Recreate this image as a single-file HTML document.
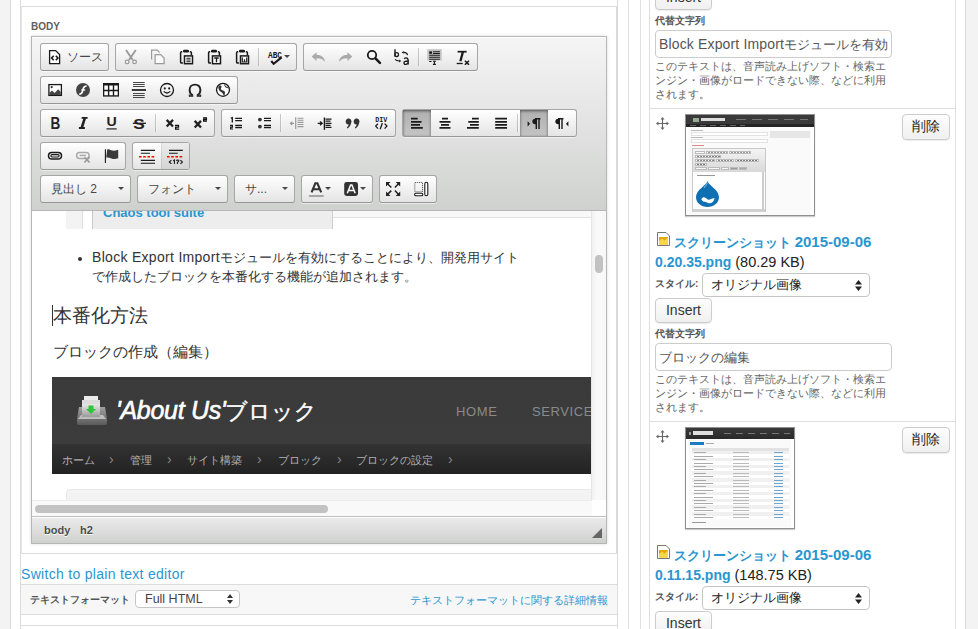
<!DOCTYPE html>
<html><head><meta charset="utf-8">
<style>
*{box-sizing:border-box}
html,body{margin:0;padding:0}
body{width:978px;height:629px;overflow:hidden;position:relative;background:#fff;font-family:"Liberation Sans",sans-serif;color:#333}
.a{position:absolute}
.vl{position:absolute;width:1px;background:#dcdcdc}
.hl{position:absolute;height:1px;background:#dcdcdc}
/* editor */
.chrome{position:absolute;left:31px;top:36px;width:576px;height:508px;border:1px solid #b6b6b6;box-shadow:0 0 3px rgba(0,0,0,.15);background:#fff}
.top{position:absolute;left:0;top:0;width:574px;height:174px;background:linear-gradient(#f5f5f5,#cfd1cf);border-bottom:1px solid #b6b6b6;box-shadow:0 1px 0 #fff inset}
.grp{position:absolute;height:28px;border:1px solid #a6a6a6;border-bottom-color:#979797;border-radius:3px;background:linear-gradient(#fff,#e4e4e4);box-shadow:0 1px 0 rgba(255,255,255,.5)}
.btn{position:absolute;top:0;width:28px;height:26px}
.btn.on{background:linear-gradient(#b0b0b0,#c4c4c4);box-shadow:0 1px 3px rgba(0,0,0,.55) inset}
.btn.half{background:linear-gradient(#ececec,#d4d4d4);box-shadow:1px 0 0 rgba(0,0,0,.08) inset}
.btn svg{position:absolute;left:6px;top:5px;width:16px;height:16px}
.sep{position:absolute;top:4px;width:1px;height:18px;background:rgba(0,0,0,.2);box-shadow:1px 0 1px rgba(255,255,255,.5)}
.arr{position:absolute;width:0;height:0;border-left:3px solid transparent;border-right:3px solid transparent;border-top:3px solid #474747}
.combo{position:absolute;top:138px;height:28px;border:1px solid #a6a6a6;border-bottom-color:#979797;border-radius:3px;background:linear-gradient(#fff,#e4e4e4)}
.combo span{position:absolute;left:10px;top:0;line-height:26px;font-size:12px;color:#474747;white-space:nowrap}
.combo .arr{top:11px}
.bottom{position:absolute;left:0;top:479px;width:574px;height:27px;border-top:1px solid #bfbfbf;background:linear-gradient(#ebebeb,#cfd1cf);box-shadow:0 1px 0 #fff inset}
.path{position:absolute;top:7px;font-size:11px;font-weight:bold;color:#4c4c4c;text-shadow:0 1px 0 #fff}
.content{position:absolute;left:0;top:174px;width:574px;height:305px;overflow:hidden;background:#fff}
.blue{color:#2a96d0}
/* right column */
.lab{position:absolute;font-size:11px;font-weight:bold;color:#555;white-space:nowrap}
.inp{position:absolute;height:27px;border:1px solid #ccc;border-radius:4px;background:#fff;font-size:14px;color:#555;padding:0 0 0 3px;line-height:25px;white-space:nowrap;overflow:hidden}
.desc{position:absolute;font-size:12px;line-height:15px;color:#666;width:240px}
.rbtn{position:absolute;height:25px;border:1px solid #ccc;border-radius:4px;background:linear-gradient(#fdfdfd,#f0f0f0);font-size:14px;color:#333;text-align:center;line-height:23px;box-shadow:0 1px 1px rgba(0,0,0,.08)}
.sel{position:absolute;height:25px;border:1px solid #c6c6c6;border-radius:4px;background:#fff;font-size:14px;color:#222;line-height:23px;padding-left:13px;white-space:nowrap}
</style></head><body>
<!-- page frame -->
<div class="a" style="left:0;top:0;width:10px;height:629px;background:#f3f3f3"></div>
<div class="vl" style="left:10px;top:0;height:629px;background:#dadada"></div>
<div class="a" style="left:966px;top:0;width:12px;height:629px;background:#f3f3f3"></div>
<div class="vl" style="left:965px;top:0;height:629px;background:#dadada"></div>
<div class="vl" style="left:20px;top:0;height:629px;background:#dadada"></div>
<div class="vl" style="left:617px;top:0;height:629px;background:#dadada"></div>
<div class="vl" style="left:628px;top:0;height:629px;background:#e2e2e2"></div>
<div class="vl" style="left:640px;top:0;height:629px;background:#e2e2e2"></div>
<div class="vl" style="left:649px;top:0;height:629px;background:#dedede"></div>
<div class="vl" style="left:955px;top:0;height:629px;background:#dedede"></div>
<!-- body fieldset -->
<div class="a" style="left:21px;top:6px;width:596px;height:548px;border:1px solid #e2e2e2;border-right-color:#dadada;border-bottom-color:#dadada;border-top-color:#dadada;border-left-color:#e6e6e6"></div>
<div class="a" style="left:31px;top:21px;font-size:10px;line-height:12px;font-weight:bold;color:#606060">BODY</div>

<div class="chrome">
 <div class="top" id="tb"><div class="grp" style="left:8px;top:6px;width:69px"><div class="btn" style="left:0px;width:67px"><svg viewBox="0 0 16 16"><path d="M2.6 1.6H8.6L12.6 5.6V14.6H2.6Z" fill="#fff" stroke="#1a1a1a" stroke-width="1.3"/><path d="M6.7 6.8L4.6 9 6.7 11.2M8.8 6.8L10.9 9 8.8 11.2" fill="none" stroke="#1a1a1a" stroke-width="1.6"/></svg><span class="a" style="left:26px;top:5px;font-size:12px;line-height:16px;color:#474747">ソース</span></div></div><div class="grp" style="left:83px;top:6px;width:182px"><div class="btn" style="left:0px;width:28px"><svg viewBox="0 0 16 16"><path d="M4 1L10.8 11M13.8 1L7 11" stroke="#999" stroke-width="1.8"/><circle cx="5.2" cy="12.9" r="1.8" fill="#fff" stroke="#999" stroke-width="1.3"/><circle cx="12.6" cy="12.9" r="1.8" fill="#fff" stroke="#999" stroke-width="1.3"/></svg></div><div class="btn" style="left:28px;width:28px"><svg viewBox="0 0 16 16"><path d="M1.6 10.4V1.2H7.3L9.6 3.6" fill="none" stroke="#999" stroke-width="1.2"/><path d="M5.1 5.6H10.6L14.1 9.1V14.7H5.1Z" fill="#fafafa" stroke="#999" stroke-width="1.2"/></svg></div><div class="btn" style="left:56px;width:28px"><svg viewBox="0 0 16 16"><path d="M4.2 2.8H3.6Q2.6 2.8 2.6 3.8V13Q2.6 14.1 3.6 14.1H5" fill="none" stroke="#1a1a1a" stroke-width="1.5"/><path d="M11.8 2.8H12.4Q13.4 2.8 13.4 3.8V6.3" fill="none" stroke="#1a1a1a" stroke-width="1.5"/><rect x="5" y="0.8" width="6" height="2.6" rx="1.2" fill="#1a1a1a"/><rect x="6.5" y="6.9" width="8" height="7.8" fill="#fff" stroke="#1a1a1a" stroke-width="1.5"/><path d="M8.4 9.2H12.6M8.4 11H12.6M8.4 12.8H12.6" stroke="#1a1a1a" stroke-width="1.1"/></svg></div><div class="btn" style="left:84px;width:28px"><svg viewBox="0 0 16 16"><path d="M4.2 2.8H3.6Q2.6 2.8 2.6 3.8V13Q2.6 14.1 3.6 14.1H5" fill="none" stroke="#1a1a1a" stroke-width="1.5"/><path d="M11.8 2.8H12.4Q13.4 2.8 13.4 3.8V6.3" fill="none" stroke="#1a1a1a" stroke-width="1.5"/><rect x="5" y="0.8" width="6" height="2.6" rx="1.2" fill="#1a1a1a"/><rect x="6.5" y="6.9" width="8" height="7.8" fill="#fff" stroke="#1a1a1a" stroke-width="1.5"/><path d="M8.3 9H12.7M10.5 9V13.3" stroke="#1a1a1a" stroke-width="1.4"/></svg></div><div class="btn" style="left:112px;width:28px"><svg viewBox="0 0 16 16"><path d="M4.2 2.8H3.6Q2.6 2.8 2.6 3.8V13Q2.6 14.1 3.6 14.1H5" fill="none" stroke="#1a1a1a" stroke-width="1.5"/><path d="M11.8 2.8H12.4Q13.4 2.8 13.4 3.8V6.3" fill="none" stroke="#1a1a1a" stroke-width="1.5"/><rect x="5" y="0.8" width="6" height="2.6" rx="1.2" fill="#1a1a1a"/><rect x="6.5" y="6.9" width="8" height="7.8" fill="#fff" stroke="#1a1a1a" stroke-width="1.5"/><path d="M8.3 8.6V13H12.7V8.6M10.5 10.2V13" fill="none" stroke="#1a1a1a" stroke-width="1.2"/></svg></div><div class="sep" style="left:142px"></div><div class="btn" style="left:145px;width:35px"><svg viewBox="0 0 16 16"><text x="1" y="8.8" font-family="Liberation Mono" font-size="9" font-weight="bold" fill="#1a1a1a" textLength="14" lengthAdjust="spacingAndGlyphs">ABC</text><path d="M4.3 12L6.6 14.8 14.6 8.4" fill="none" stroke="#1a1a1a" stroke-width="2.1"/></svg><div class="arr" style="left:23px;top:11px"></div></div></div><div class="grp" style="left:271px;top:6px;width:175px"><div class="btn" style="left:0px;width:28px"><svg viewBox="0 0 16 16"><path d="M6.5 3.3L1.7 7.6 6.5 11.9V9.3C10 9.2 12.8 10.3 15 12.8 14.6 8.6 11.3 5.9 6.5 5.8Z" fill="#aaa"/></svg></div><div class="btn" style="left:28px;width:28px"><svg viewBox="0 0 16 16"><path d="M9.5 3.3L14.3 7.6 9.5 11.9V9.3C6 9.2 3.2 10.3 1 12.8 1.4 8.6 4.7 5.9 9.5 5.8Z" fill="#aaa"/></svg></div><div class="btn" style="left:56px;width:28px"><svg viewBox="0 0 16 16"><circle cx="6" cy="6" r="4.2" fill="none" stroke="#1a1a1a" stroke-width="1.8"/><path d="M9.4 9.4L13.9 13.9" stroke="#1a1a1a" stroke-width="2.6" stroke-linecap="round"/></svg></div><div class="btn" style="left:84px;width:28px"><svg viewBox="0 0 16 16"><path d="M1 0.3V7.8" stroke="#1a1a1a" stroke-width="1.4"/><ellipse cx="2.7" cy="5.6" rx="1.8" ry="2" fill="none" stroke="#1a1a1a" stroke-width="1.3"/><path d="M10.2 9.8Q11.5 8.3 13 9.2Q14.2 9.9 14.2 11.5V15.6M14.2 12.3Q10 11.8 10 13.8Q10 15.6 12 15.4Q13.5 15.2 14.2 13.5" fill="none" stroke="#1a1a1a" stroke-width="1.4"/><path d="M13.6 6.1Q13 3.4 9.6 3.4" fill="none" stroke="#1a1a1a" stroke-width="1.1"/><path d="M7.6 3.4L9.8 2 9.8 4.8Z" fill="#1a1a1a"/><path d="M1.2 10.3Q2 12 5.3 12" fill="none" stroke="#1a1a1a" stroke-width="1.1"/><path d="M7.3 12L5.1 10.6 5.1 13.4Z" fill="#1a1a1a"/></svg></div><div class="sep" style="left:114px"></div><div class="btn" style="left:117px;width:28px"><svg viewBox="0 0 16 16"><rect x="0.3" y="0.2" width="14.4" height="11.3" fill="#c4c4c4"/><rect x="2.2" y="2.4" width="2.8" height="2.4" fill="#1a1a1a"/><path d="M5.9 2.8H12.9M5.9 4.5H12.9M2.2 6.3H12.9M2.2 8.2H12.9M2.2 10.2H12.9M2.2 12.5H4.6" stroke="#1a1a1a" stroke-width="1.1"/><path d="M5.9 12.3H8.9M7.4 12.3V15.4M5.9 15.4H8.9" stroke="#1a1a1a" stroke-width="1.1"/></svg></div><div class="btn" style="left:145px;width:28px"><svg viewBox="0 0 16 16"><path d="M2.6 2.7H11.6" stroke="#1a1a1a" stroke-width="1.7"/><path d="M7.9 2.7L5.4 12.2" stroke="#1a1a1a" stroke-width="2.3"/><path d="M1.7 14.5H7.7" stroke="#1a1a1a" stroke-width="1.3"/><path d="M9.9 11.7L14 15.8M14 11.7L9.9 15.8" stroke="#1a1a1a" stroke-width="1.5"/></svg></div></div><div class="grp" style="left:8px;top:39px;width:198px"><div class="btn" style="left:0px;width:28px"><svg viewBox="0 0 16 16"><rect x="1.9" y="2.6" width="12.5" height="10.8" fill="#fff" stroke="#1a1a1a" stroke-width="1.3"/><circle cx="4.7" cy="5.2" r="1.1" fill="#333"/><path d="M2.5 13V10.8L5 8.4 7.6 11 11.2 7.2 13.8 10V13Z" fill="#444"/></svg></div><div class="btn" style="left:28px;width:28px"><svg viewBox="0 0 16 16"><circle cx="8" cy="8" r="7" fill="#444"/><path d="M4.3 12.2C6.4 12.2 7.1 11 7.6 9.1L8.3 6.4C8.8 4.8 9.6 4 11.7 4" fill="none" stroke="#fff" stroke-width="1.7"/><path d="M6.2 8H10.2" stroke="#fff" stroke-width="1.3"/></svg></div><div class="btn" style="left:56px;width:28px"><svg viewBox="0 0 16 16"><rect x="0" y="1" width="16" height="13.6" fill="#1a1a1a"/><path d="M1.3 3.6H4.9V7.8H1.3ZM6.3 3.6H9.8V7.8H6.3ZM11.2 3.6H14.7V7.8H11.2ZM1.3 9.2H4.9V13.3H1.3ZM6.3 9.2H9.8V13.3H6.3ZM11.2 9.2H14.7V13.3H11.2Z" fill="#fff"/></svg></div><div class="btn" style="left:84px;width:28px"><svg viewBox="0 0 16 16"><path d="M2 0.5H13.7M2 2.5H13.7M2 4.5H13.7M2 11.5H13.7M2 13.5H13.7M2 15.5H13.7" stroke="#333" stroke-width="0.9"/><path d="M0.8 8H15" stroke="#1a1a1a" stroke-width="1.7"/></svg></div><div class="btn" style="left:112px;width:28px"><svg viewBox="0 0 16 16"><circle cx="8" cy="8" r="6.5" fill="none" stroke="#1a1a1a" stroke-width="1.3"/><circle cx="5.8" cy="6.4" r="1.05" fill="#1a1a1a"/><circle cx="10.2" cy="6.4" r="1.05" fill="#1a1a1a"/><path d="M4.7 9.4Q8 12.6 11.3 9.4" fill="none" stroke="#1a1a1a" stroke-width="1.3"/></svg></div><div class="btn" style="left:140px;width:28px"><svg viewBox="0 0 16 16"><path d="M5.8 13.4C3.6 12.2 2.6 10.2 2.6 7.9 2.6 4.6 4.9 2.6 8 2.6 11.1 2.6 13.4 4.6 13.4 7.9 13.4 10.2 12.4 12.2 10.2 13.4" fill="none" stroke="#222" stroke-width="1.9"/><path d="M2 13.9H6.3M9.7 13.9H14" stroke="#222" stroke-width="1.5"/><path d="M2.3 12.5V14.5M13.7 12.5V14.5" stroke="#222" stroke-width="1"/></svg></div><div class="btn" style="left:168px;width:28px"><svg viewBox="0 0 16 16"><circle cx="8" cy="7.8" r="6.5" fill="#fff" stroke="#1a1a1a" stroke-width="1.3"/><path d="M4 3.8C5.5 3 6.8 3.6 6.5 5 6.2 6.2 5.5 6.6 6.2 7.6 7.2 8.8 9.2 8.4 9.8 9.8 10.3 11 9.6 12.2 9.6 13.6L8.9 14C8.4 12.5 7.9 11.6 6.8 10.6 5.4 9.4 4 8.6 3.5 6.8 3.2 5.6 3.3 4.6 4 3.8Z" fill="#333"/><path d="M9.5 2C10.5 2.6 10.2 3.8 11.2 4.5 12.3 5.2 13.6 5 14 6.2 13 6.4 11.8 6.2 10.8 5.6 9.8 4.9 9 3.4 9.5 2Z" fill="#333"/></svg></div></div><div class="grp" style="left:8px;top:72px;width:175px"><div class="btn" style="left:0px;width:28px"><svg viewBox="0 0 16 16"><text x="3.6" y="13.9" font-family="Liberation Sans" font-size="16.3" font-weight="bold" fill="#222" textLength="9.8" lengthAdjust="spacingAndGlyphs">B</text></svg></div><div class="btn" style="left:28px;width:28px"><svg viewBox="0 0 16 16"><path d="M6.6 2.9H12.6M3.9 13H9.9" stroke="#222" stroke-width="1.9"/><path d="M9.9 2.9L6.7 13" stroke="#222" stroke-width="2.6"/></svg></div><div class="btn" style="left:56px;width:28px"><svg viewBox="0 0 16 16"><text x="3.5" y="11.4" font-family="Liberation Sans" font-size="12.8" font-weight="bold" fill="#222" textLength="10.2" lengthAdjust="spacingAndGlyphs">U</text><path d="M3.5 13.9H13.7" stroke="#222" stroke-width="1.2"/></svg></div><div class="btn" style="left:84px;width:28px"><svg viewBox="0 0 16 16"><text x="2.3" y="13.5" font-family="Liberation Sans" font-size="15.5" font-weight="bold" fill="#222" textLength="11.5" lengthAdjust="spacingAndGlyphs">S</text><path d="M1.8 8.3H15" stroke="#222" stroke-width="1.3"/></svg></div><div class="sep" style="left:114px"></div><div class="btn" style="left:117px;width:28px"><svg viewBox="0 0 16 16"><path d="M2.7 4.9L9 11.5M9 4.9L2.7 11.5" stroke="#222" stroke-width="2.3"/><path d="M11 10.3H14.5V12.2H11.6V14.2H15.2" fill="none" stroke="#111" stroke-width="1.3"/></svg></div><div class="btn" style="left:145px;width:28px"><svg viewBox="0 0 16 16"><path d="M2.7 5.9L9 12.5M9 5.9L2.7 12.5" stroke="#222" stroke-width="2.3"/><path d="M11 2.8H14.4V4.5H11.6V6.2H15" fill="none" stroke="#111" stroke-width="1.3"/></svg></div></div><div class="grp" style="left:189px;top:72px;width:175px"><div class="btn" style="left:0px;width:28px"><svg viewBox="0 0 16 16"><path d="M2.8 3.2L4.3 2.7V7.6" fill="none" stroke="#1a1a1a" stroke-width="1.3"/><path d="M2 10.3H4.4V12.1H2.6V14H5" fill="none" stroke="#1a1a1a" stroke-width="1.2"/><path d="M7.2 3.4H14M7.2 5.6H14M7.2 10.5H14M7.2 12.6H14" stroke="#1a1a1a" stroke-width="1.3"/></svg></div><div class="btn" style="left:28px;width:28px"><svg viewBox="0 0 16 16"><circle cx="3.9" cy="4.6" r="1.9" fill="#333"/><circle cx="3.9" cy="11.6" r="1.9" fill="#333"/><path d="M8 3.4H15M8 5.6H15M8 10.5H15M8 12.6H15" stroke="#1a1a1a" stroke-width="1.3"/></svg></div><div class="sep" style="left:58px"></div><div class="btn" style="left:61px;width:28px"><svg viewBox="0 0 16 16"><path d="M8.5 3.2H14.5M8.5 5.3H14.5M8.5 7.4H14.5M8.5 9.5H14.5M8.5 11.6H14.5" stroke="#999" stroke-width="1.1"/><path d="M6.7 2.3V14" stroke="#999" stroke-width="1.2"/><path d="M5 8.4H1.5M3.3 6.6L1.3 8.4 3.3 10.2" fill="none" stroke="#999" stroke-width="1.1"/></svg></div><div class="btn" style="left:89px;width:28px"><svg viewBox="0 0 16 16"><path d="M8.5 4.2H14.5M8.5 6.2H13.5M8.5 8.3H14.5M8.5 10.3H13.5M8.5 12.4H14.5" stroke="#1a1a1a" stroke-width="1.3"/><path d="M7.4 2.5V14.8" stroke="#1a1a1a" stroke-width="1.4"/><path d="M0.7 8.3H4.5M3 6.4L5.2 8.3 3 10.2" fill="none" stroke="#1a1a1a" stroke-width="1.3"/></svg></div><div class="btn" style="left:117px;width:28px"><svg viewBox="0 0 16 16"><path d="M0.7 6.6A2.9 2.9 0 1 1 6.3 7.4C5.8 10 4.6 11.8 2.6 13.4L1.8 12.6C2.9 11.5 3.5 10.6 3.7 9.5A2.9 2.9 0 0 1 0.7 6.6ZM8.7 6.6A2.9 2.9 0 1 1 14.3 7.4C13.8 10 12.6 11.8 10.6 13.4L9.8 12.6C10.9 11.5 11.5 10.6 11.7 9.5A2.9 2.9 0 0 1 8.7 6.6Z" fill="#333"/></svg></div><div class="btn" style="left:145px;width:28px"><svg viewBox="0 0 16 16"><text x="2.3" y="6.9" font-family="Liberation Mono" font-size="7" font-weight="bold" fill="#1a1a1a" textLength="12" lengthAdjust="spacingAndGlyphs">DIV</text><path d="M5 8.6L2.7 11.1 5 13.6M11.6 8.6L13.9 11.1 11.6 13.6M9.4 8L7.2 14.3" fill="none" stroke="#1a1a1a" stroke-width="1.3"/></svg></div></div><div class="grp" style="left:370px;top:72px;width:175px"><div class="btn on" style="left:0px;width:28px"><svg viewBox="0 0 16 16"><path d="M2 3.7H8.7M2 6.8H12.5M2 9.8H11M2 12.9H13.8" stroke="#1a1a1a" stroke-width="1.8"/></svg></div><div class="btn" style="left:28px;width:28px"><svg viewBox="0 0 16 16"><path d="M5 3.7H11M2.5 6.8H13.5M4 9.8H12M2.5 12.9H13.5" stroke="#1a1a1a" stroke-width="1.8"/></svg></div><div class="btn" style="left:56px;width:28px"><svg viewBox="0 0 16 16"><path d="M7 3.7H13.8M3.3 6.8H13.8M5 9.8H13.8M2 12.9H13.8" stroke="#1a1a1a" stroke-width="1.8"/></svg></div><div class="btn" style="left:84px;width:28px"><svg viewBox="0 0 16 16"><path d="M2.2 3.7H14M2.2 6.8H14M2.2 9.8H14M2.2 12.9H14" stroke="#1a1a1a" stroke-width="1.8"/></svg></div><div class="sep" style="left:114px"></div><div class="btn on" style="left:117px;width:28px"><svg viewBox="0 0 16 16"><path d="M1.6 6.2V11.4L4 8.8Z" fill="#1a1a1a"/><path d="M10 3.7H9.2A2.8 2.8 0 0 0 9.2 9.3H10Z" fill="#1a1a1a"/><path d="M10.3 3.7V13.9M13 3.7V13.9M9 3.7H14.4" fill="none" stroke="#1a1a1a" stroke-width="1.4"/></svg></div><div class="btn" style="left:145px;width:28px"><svg viewBox="0 0 16 16"><path d="M14.4 6.2V11.4L12 8.8Z" fill="#1a1a1a"/><path d="M5 3.7H4.2A2.8 2.8 0 0 0 4.2 9.3H5Z" fill="#1a1a1a"/><path d="M5.3 3.7V13.9M8 3.7V13.9M4 3.7H9.4" fill="none" stroke="#1a1a1a" stroke-width="1.4"/></svg></div></div><div class="grp" style="left:8px;top:105px;width:86px"><div class="btn" style="left:0px;width:28px"><svg viewBox="0 0 16 16"><rect x="1.5" y="4.5" width="13" height="6.6" rx="3.3" fill="none" stroke="#1a1a1a" stroke-width="1.5"/><rect x="3.9" y="6.6" width="8.2" height="2.4" rx="1.2" fill="none" stroke="#1a1a1a" stroke-width="1.2"/></svg></div><div class="btn" style="left:28px;width:28px"><svg viewBox="0 0 16 16"><rect x="1.6" y="4.4" width="12.5" height="6" rx="3" fill="none" stroke="#aaa" stroke-width="1.5"/><path d="M4.6 7.4H11" stroke="#aaa" stroke-width="1.5"/><path d="M9.4 9.2L14.6 14.4M14.6 9.2L9.4 14.4" stroke="#999" stroke-width="1.5"/></svg></div><div class="btn" style="left:56px;width:28px"><svg viewBox="0 0 16 16"><path d="M2.4 1.2V15" stroke="#1a1a1a" stroke-width="1.1"/><path d="M4.2 1.6C5 1 6.4 1.6 8.2 2.3 10.4 3.1 12.6 2.6 15.2 1.8V10.2C12.8 11 10.6 11.3 8.4 10.4 6.6 9.7 5 9.2 3.2 9.6Z" fill="#3a3a3a"/></svg></div></div><div class="grp" style="left:100px;top:105px;width:58px"><div class="btn" style="left:0px;width:28px"><svg viewBox="0 0 16 16"><path d="M1.8 2.4H16M1.8 5.2H11M1.8 12.4H16M1.8 15.2H16" stroke="#1a1a1a" stroke-width="1.1"/><path d="M0 8.8H16" stroke="#f00" stroke-width="1.6" stroke-dasharray="2.6 1.6"/></svg></div><div class="btn half" style="left:28px;width:28px"><svg viewBox="0 0 16 16"><path d="M2 2.4H15.8M2 5.2H10.7" stroke="#1a1a1a" stroke-width="1.1"/><path d="M0 8.8H15.8" stroke="#f00" stroke-width="1.6" stroke-dasharray="2.6 1.6"/><path d="M4.4 12.1L2.3 14 4.4 15.9M6.2 12.8L7.4 12V15.9M9 12.5Q9.6 12 11 12Q12 12.2 11.8 13Q11.5 13.6 10.4 14.4V15.9M13.4 12.1L15.5 14 13.4 15.9" fill="none" stroke="#1a1a1a" stroke-width="1.1"/></svg></div></div><div class="combo" style="left:8px;width:91px"><span>見出し 2</span><div class="arr" style="left:77px"></div></div><div class="combo" style="left:105px;width:91px"><span>フォント</span><div class="arr" style="left:77px"></div></div><div class="combo" style="left:202px;width:61px"><span>サ...</span><div class="arr" style="left:47px"></div></div><div class="grp" style="left:269px;top:138px;width:72px"><div class="btn" style="left:0px;width:35px"><svg viewBox="0 0 16 16"><path d="M3.6 11.4L7.3 2.3H9.4L13.2 11.4M5 8.3H11.8" fill="none" stroke="#333" stroke-width="2.1"/><path d="M0.9 15H15.7" stroke="#888" stroke-width="1.4"/></svg><div class="arr" style="left:23px;top:11px"></div></div><div class="btn" style="left:35px;width:35px"><svg viewBox="0 0 16 16"><rect x="1.2" y="1.1" width="13.8" height="13.9" rx="2.4" fill="#333"/><path d="M4.3 12.3L7.6 4H8.9L12.2 12.3M5.6 9.5H10.9" fill="none" stroke="#fff" stroke-width="1.5"/></svg><div class="arr" style="left:23px;top:11px"></div></div></div><div class="grp" style="left:347px;top:138px;width:58px"><div class="btn" style="left:0px;width:28px"><svg viewBox="0 0 16 16"><path d="M1 2.2L5.3 6.5M13 2.2L8.9 6.5M1 13.9L5.3 9.6M13 13.9L8.9 9.6" stroke="#222" stroke-width="1.5"/><path d="M0 1.1H4.5L0 5.6ZM14.2 1.1H9.7L14.2 5.6ZM0 15H4.5L0 10.5ZM14.2 15H9.7L14.2 10.5Z" fill="#222"/></svg></div><div class="btn" style="left:28px;width:28px"><svg viewBox="0 0 16 16"><path d="M0.8 1.5H8.5V10.8H0.8Z" fill="none" stroke="#333" stroke-width="0.9" stroke-dasharray="1 1"/><rect x="0.6" y="12.2" width="8.2" height="2.6" rx="1.3" fill="#fff" stroke="#1a1a1a" stroke-width="1.1"/><rect x="10.8" y="1.2" width="3" height="13.6" rx="1.5" fill="#fff" stroke="#1a1a1a" stroke-width="1.1"/></svg></div></div></div>
 <div class="content" id="ct">
<div class="a" style="left:34px;top:0;width:17px;height:18px;background:#f3f3f3;border-right:1px solid #e0e0e0"></div>
<div class="a" style="left:60px;top:0;width:241px;height:18px;background:#ededed;border-left:1px solid #c8c8c8;border-right:1px solid #cfcfcf"></div>
<div class="a blue" style="left:71px;top:-6px;font-size:13px;font-weight:bold;line-height:16px">Chaos tool suite</div>
<div class="a" style="left:301px;top:0;width:258px;height:7px;background:#f8f8f8;border-bottom:1px solid #e2e2e2"></div>
<div class="a" style="left:46px;top:46px;width:4px;height:4px;border-radius:2px;background:#333"></div>
<div class="a" style="left:60px;top:36px;font-size:13px;line-height:20px;height:20px;color:#333;white-space:nowrap"><span style="font-size:14px;letter-spacing:.3px;line-height:20px">Block Export Import</span>モジュールを有効にすることにより、開発用サイト</div><div class="a" style="left:60px;top:56px;font-size:13px;line-height:20px;color:#333;white-space:nowrap">で作成したブロックを本番化する機能が追加されます。</div>
<div class="a" style="left:20px;top:94px;width:1px;height:21px;background:#333"></div>
<div class="a" style="left:21px;top:92px;font-size:19px;line-height:26px;color:#333;white-space:nowrap">本番化方法</div>
<div class="a" style="left:21px;top:131px;font-size:15px;line-height:20px;color:#333;white-space:nowrap">ブロックの作成（編集）</div>
<div class="a" style="left:20px;top:166px;width:539px;height:97px;background:linear-gradient(#3a3a3a,#3d3d3d);overflow:hidden">
  <div class="a" style="left:0;top:67px;width:539px;height:30px;background:linear-gradient(#333,#222)"></div>
  <svg class="a" style="left:24px;top:17px" width="32" height="31" viewBox="0 0 32 31"><defs><linearGradient id="bx" x1="0" y1="0" x2="0" y2="1"><stop offset="0" stop-color="#e8e8e8"/><stop offset="1" stop-color="#9a9a9a"/></linearGradient><linearGradient id="tr" x1="0" y1="0" x2="0" y2="1"><stop offset="0" stop-color="#a0a0a0"/><stop offset="1" stop-color="#5a5a5a"/></linearGradient></defs><path d="M3 13L1 25V29Q1 31 3 31H29Q31 31 31 29V25L29 13Z" fill="url(#tr)"/><path d="M5 21H27L30 25H2Z" fill="#bdbdbd"/><rect x="6" y="10" width="18" height="13" fill="url(#bx)"/><rect x="6" y="6" width="18" height="4" fill="#dcdcdc"/><rect x="8" y="2" width="14" height="4" fill="#eaeaea"/><path d="M12.5 11.5H17.5V15H20L15 20 10 15H12.5Z" fill="#2fc43b"/></svg>
  <div class="a" style="left:64px;top:21px;font-size:25px;line-height:25px;color:#fff;white-space:nowrap"><i style="-webkit-text-stroke:.6px #fff;letter-spacing:-.3px">'About Us'</i><span style="font-size:22px;-webkit-text-stroke:.4px #fff">ブロック</span></div>
  <div class="a" style="left:404px;top:28px;font-size:13px;line-height:13px;color:#8a8a8a;letter-spacing:.6px">HOME</div>
  <div class="a" style="left:480px;top:28px;font-size:13px;line-height:13px;color:#8a8a8a;letter-spacing:.6px">SERVICES</div>
  <div class="a" style="left:10px;top:76px;font-size:11px;line-height:14px;color:#b0b0b0;white-space:nowrap">ホーム</div>
  <div class="a" style="left:57px;top:74px;font-size:14px;line-height:16px;color:#888">&#8250;</div>
  <div class="a" style="left:78px;top:76px;font-size:11px;line-height:14px;color:#b0b0b0">管理</div>
  <div class="a" style="left:115px;top:74px;font-size:14px;line-height:16px;color:#888">&#8250;</div>
  <div class="a" style="left:135px;top:76px;font-size:11px;line-height:14px;color:#b0b0b0;white-space:nowrap">サイト構築</div>
  <div class="a" style="left:205px;top:74px;font-size:14px;line-height:16px;color:#888">&#8250;</div>
  <div class="a" style="left:226px;top:76px;font-size:11px;line-height:14px;color:#b0b0b0;white-space:nowrap">ブロック</div>
  <div class="a" style="left:285px;top:74px;font-size:14px;line-height:16px;color:#888">&#8250;</div>
  <div class="a" style="left:304px;top:76px;font-size:11px;line-height:14px;color:#b0b0b0;white-space:nowrap">ブロックの設定</div>
  <div class="a" style="left:396px;top:74px;font-size:14px;line-height:16px;color:#888">&#8250;</div>
</div>
<div class="a" style="left:34px;top:278px;width:530px;height:14px;background:#f3f3f3;border:1px solid #e8e8e8;border-radius:4px"></div>
<div class="a" style="left:0;top:289px;width:560px;height:16px;background:#f9f9f9;border-top:1px solid #ececec"></div>
<div class="a" style="left:3px;top:294px;width:293px;height:8px;border-radius:4px;background:#c2c2c2"></div>
<div class="a" style="left:559px;top:0;width:15px;height:289px;background:linear-gradient(90deg,#f2f2f2,#fafafa 40%,#f7f7f7);border-left:1px solid #e6e6e6"></div>
<div class="a" style="left:563px;top:44px;width:8px;height:18px;border-radius:4px;background:#c2c2c2"></div>
<div class="a" style="left:560px;top:289px;width:14px;height:16px;background:#fff"></div>
</div>
 <div class="bottom">
  <span class="path" style="left:12px">body</span>
  <span class="path" style="left:48px">h2</span>
  <div class="a" style="right:4px;top:11px;width:0;height:0;border-style:solid;border-width:0 0 10px 10px;border-color:transparent transparent #666 transparent"></div>
 </div>
</div>

<div class="a blue" style="left:21px;top:566px;font-size:14px;line-height:17px;letter-spacing:.3px">Switch to plain text editor</div>
<div class="a" style="left:20px;top:584px;width:598px;height:31px;background:#f7f7f7;border:1px solid #dcdcdc"></div>
<div class="a" style="left:30px;top:593px;font-size:10px;line-height:14px;font-weight:bold;color:#555;white-space:nowrap">テキストフォーマット</div>
<div class="sel" style="left:135px;top:590px;width:105px;height:18px;line-height:16px;font-size:12.5px;padding-left:9px;color:#444">Full HTML<svg class="a" style="left:91px;top:3px" width="6" height="10" viewBox="0 0 6 10"><path d="M0 4L3 0 6 4zM0 6l3 4 3-4z" fill="#333"/></svg></div>
<div class="a blue" style="left:410px;top:593px;font-size:11px;line-height:14px;white-space:nowrap">テキストフォーマットに関する詳細情報</div>
<div class="hl" style="left:20px;top:625px;width:598px"></div>

<!-- right column -->
<div id="rc"><div class="hl" style="left:649px;top:-205px;width:307px;background:#dedede"></div><svg class="a" style="left:656px;top:-196px" width="13" height="13" viewBox="0 0 15 15"><path d="M7.5 1.5v12M1.5 7.5h12" stroke="#666" stroke-width="1.3"/><path d="M7.5 0l2.3 2.8h-4.6zM7.5 15l2.3-2.8h-4.6zM0 7.5l2.8 2.3v-4.6zM15 7.5l-2.8 2.3v-4.6z" fill="#666"/></svg><div class="a" style="left:685px;top:-199px;width:130px;height:102px;border:1px solid #8f8f8f;background:#fff;overflow:hidden;box-shadow:0 1px 1px rgba(0,0,0,.2)">
<div class="a" style="left:0;top:0;width:128px;height:9px;background:#3a3a3a"></div>
<div class="a" style="left:0;top:9px;width:128px;height:3px;background:#242424"></div>
<div class="a" style="left:7px;top:3px;width:6px;height:4px;background:#9a9"></div>
<div class="a" style="left:15px;top:3px;width:24px;height:3px;background:#ddd"></div>
<div class="a" style="left:50px;top:4px;width:72px;height:1px;background:repeating-linear-gradient(90deg,#777 0 10px,transparent 10px 16px)"></div>
<div class="a" style="left:4px;top:10px;width:55px;height:1px;background:repeating-linear-gradient(90deg,#666 0 6px,transparent 6px 10px)"></div>
<div class="a" style="left:3px;top:12px;width:122px;height:88px;background:#fafafa"></div>
<div class="a" style="left:5px;top:15px;width:12px;height:1px;background:#bbb"></div>
<div class="a" style="left:5px;top:17px;width:77px;height:4px;border:1px solid #e2e2e2;background:#fff"></div>
<div class="a" style="left:5px;top:22px;width:12px;height:1px;background:#bbb"></div>
<div class="a" style="left:5px;top:24px;width:77px;height:4px;border:1px solid #e2e2e2;background:#fff"></div>
<div class="a" style="left:84px;top:16px;width:40px;height:7px;background:#e6e6e6"></div>
<div class="a" style="left:6px;top:30px;width:12px;height:1px;background:#d88"></div>
<div class="a" style="left:6px;top:33px;width:74px;height:64px;border:1px solid #c8c8c8;background:#fff"></div>
<div class="a" style="left:7px;top:34px;width:72px;height:23px;background:linear-gradient(#f4f4f4,#d8d8d8)"></div>
<div class="a" style="left:9px;top:36px;width:10px;height:3px;border:1px solid #bbb;background:#fff"></div>
<div class="a" style="left:20px;top:36px;width:22px;height:3px;border:1px solid #bbb;background:repeating-linear-gradient(90deg,#fff 0 1px,#999 1px 3px)"></div>
<div class="a" style="left:43px;top:36px;width:22px;height:3px;border:1px solid #bbb;background:repeating-linear-gradient(90deg,#fff 0 1px,#999 1px 3px)"></div>
<div class="a" style="left:9px;top:40px;width:26px;height:3px;border:1px solid #bbb;background:repeating-linear-gradient(90deg,#fff 0 1px,#888 1px 3px)"></div>
<div class="a" style="left:9px;top:44px;width:20px;height:3px;border:1px solid #bbb;background:repeating-linear-gradient(90deg,#fff 0 1px,#888 1px 3px)"></div>
<div class="a" style="left:30px;top:44px;width:18px;height:3px;border:1px solid #bbb;background:repeating-linear-gradient(90deg,#fff 0 1px,#888 1px 3px)"></div>
<div class="a" style="left:49px;top:44px;width:24px;height:3px;border:1px solid #bbb;background:repeating-linear-gradient(90deg,#fff 0 1px,#777 1px 3px)"></div>
<div class="a" style="left:9px;top:48px;width:12px;height:3px;border:1px solid #bbb;background:repeating-linear-gradient(90deg,#fff 0 1px,#777 1px 3px)"></div>
<div class="a" style="left:9px;top:52px;width:12px;height:3px;border:1px solid #bbb;background:#f8f8f8"></div>
<div class="a" style="left:22px;top:52px;width:12px;height:3px;border:1px solid #bbb;background:#f8f8f8"></div>
<div class="a" style="left:35px;top:52px;width:8px;height:3px;border:1px solid #bbb;background:#f8f8f8"></div>
<div class="a" style="left:44px;top:52px;width:8px;height:3px;border:1px solid #bbb;background:#999"></div>
<div class="a" style="left:53px;top:52px;width:8px;height:3px;border:1px solid #bbb;background:#aaa"></div>
<div class="a" style="left:11px;top:60px;width:18px;height:1px;background:#999"></div>
<svg class="a" style="left:10px;top:66px" width="23" height="26" viewBox="0 0 26 30" preserveAspectRatio="none"><path d="M13 0C14 5 26 10 26 18.5 26 25 20.5 30 13 30 5.5 30 0 25 0 18.5 0 10 12 5 13 0Z" fill="#0f6fb3"/><path d="M6 21C8 17 11 19 13 21 15 23 18 19 21 20 20 25 16 27 13 25 10 23 8 25 6 21Z" fill="#fff"/><path d="M9 8C11 6 12.5 4 13 2" stroke="#6fb0e0" stroke-width="1.2" fill="none"/></svg>
<div class="a" style="left:76px;top:57px;width:2px;height:37px;background:#ccc"></div>
<div class="a" style="left:7px;top:94px;width:72px;height:3px;background:#d0d0d0"></div>
</div><div class="rbtn" style="left:902px;top:-199px;width:48px;height:26px;line-height:24px;font-size:13.5px;color:#222">削除</div><svg class="a" style="left:657px;top:-81px" width="13" height="14" viewBox="0 0 13 14"><path d="M.5 .5h8.5l3.5 3.5v9.5h-12z" fill="#fff" stroke="#777"/><rect x="2" y="5" width="9" height="7.5" fill="#e5a800"/><path d="M2 9l3-2.5 2.5 2 3.5-3v7H2z" fill="#f7d64a"/></svg><div class="a blue" style="left:674px;top:-81px;font-size:13px;line-height:20px;white-space:nowrap;font-weight:bold">スクリーンショット <span style="font-size:15px">2015-09-06</span></div><div class="a" style="left:655px;top:-61px;font-size:14.5px;line-height:20px;white-space:nowrap;color:#222"><span class="blue" style="font-weight:bold;font-size:14px">x</span> (x)</div><div class="lab" style="left:655px;top:-36px;font-size:10px;line-height:14px">スタイル:</div><div class="sel" style="left:702px;top:-40px;width:168px;height:24px;line-height:22px;font-size:13px;padding-left:8px">オリジナル画像<svg class="a" style="left:152px;top:6px" width="7" height="11" viewBox="0 0 7 11"><path d="M0 4.5L3.5 0 7 4.5zM0 6.5l3.5 4.5L7 6.5z" fill="#222"/></svg></div><div class="rbtn" style="left:655px;top:-15px;width:57px">Insert</div><div class="lab" style="left:655px;top:14px;font-size:10px;line-height:14px">代替文字列</div><div class="inp" style="left:655px;top:30px;width:237px;height:28px;line-height:26px"><span style="font-size:14px;letter-spacing:.15px">Block Export Import</span><span style="font-size:13px">モジュールを有効</span></div><div class="desc" style="left:655px;top:59px;font-size:11px;line-height:14px;white-space:nowrap">このテキストは、音声読み上げソフト・検索エ<br>ンジン・画像がロードできない際、などに利用<br>されます。</div><div class="hl" style="left:649px;top:108px;width:307px;background:#dedede"></div><svg class="a" style="left:656px;top:117px" width="13" height="13" viewBox="0 0 15 15"><path d="M7.5 1.5v12M1.5 7.5h12" stroke="#666" stroke-width="1.3"/><path d="M7.5 0l2.3 2.8h-4.6zM7.5 15l2.3-2.8h-4.6zM0 7.5l2.8 2.3v-4.6zM15 7.5l-2.8 2.3v-4.6z" fill="#666"/></svg><div class="a" style="left:685px;top:114px;width:130px;height:102px;border:1px solid #8f8f8f;background:#fff;overflow:hidden;box-shadow:0 1px 1px rgba(0,0,0,.2)">
<div class="a" style="left:0;top:0;width:128px;height:9px;background:#3a3a3a"></div>
<div class="a" style="left:0;top:9px;width:128px;height:3px;background:#242424"></div>
<div class="a" style="left:7px;top:3px;width:6px;height:4px;background:#9a9"></div>
<div class="a" style="left:15px;top:3px;width:24px;height:3px;background:#ddd"></div>
<div class="a" style="left:50px;top:4px;width:72px;height:1px;background:repeating-linear-gradient(90deg,#777 0 10px,transparent 10px 16px)"></div>
<div class="a" style="left:4px;top:10px;width:55px;height:1px;background:repeating-linear-gradient(90deg,#666 0 6px,transparent 6px 10px)"></div>
<div class="a" style="left:3px;top:12px;width:122px;height:88px;background:#fafafa"></div>
<div class="a" style="left:5px;top:15px;width:12px;height:1px;background:#bbb"></div>
<div class="a" style="left:5px;top:17px;width:77px;height:4px;border:1px solid #e2e2e2;background:#fff"></div>
<div class="a" style="left:5px;top:22px;width:12px;height:1px;background:#bbb"></div>
<div class="a" style="left:5px;top:24px;width:77px;height:4px;border:1px solid #e2e2e2;background:#fff"></div>
<div class="a" style="left:84px;top:16px;width:40px;height:7px;background:#e6e6e6"></div>
<div class="a" style="left:6px;top:30px;width:12px;height:1px;background:#d88"></div>
<div class="a" style="left:6px;top:33px;width:74px;height:64px;border:1px solid #c8c8c8;background:#fff"></div>
<div class="a" style="left:7px;top:34px;width:72px;height:23px;background:linear-gradient(#f4f4f4,#d8d8d8)"></div>
<div class="a" style="left:9px;top:36px;width:10px;height:3px;border:1px solid #bbb;background:#fff"></div>
<div class="a" style="left:20px;top:36px;width:22px;height:3px;border:1px solid #bbb;background:repeating-linear-gradient(90deg,#fff 0 1px,#999 1px 3px)"></div>
<div class="a" style="left:43px;top:36px;width:22px;height:3px;border:1px solid #bbb;background:repeating-linear-gradient(90deg,#fff 0 1px,#999 1px 3px)"></div>
<div class="a" style="left:9px;top:40px;width:26px;height:3px;border:1px solid #bbb;background:repeating-linear-gradient(90deg,#fff 0 1px,#888 1px 3px)"></div>
<div class="a" style="left:9px;top:44px;width:20px;height:3px;border:1px solid #bbb;background:repeating-linear-gradient(90deg,#fff 0 1px,#888 1px 3px)"></div>
<div class="a" style="left:30px;top:44px;width:18px;height:3px;border:1px solid #bbb;background:repeating-linear-gradient(90deg,#fff 0 1px,#888 1px 3px)"></div>
<div class="a" style="left:49px;top:44px;width:24px;height:3px;border:1px solid #bbb;background:repeating-linear-gradient(90deg,#fff 0 1px,#777 1px 3px)"></div>
<div class="a" style="left:9px;top:48px;width:12px;height:3px;border:1px solid #bbb;background:repeating-linear-gradient(90deg,#fff 0 1px,#777 1px 3px)"></div>
<div class="a" style="left:9px;top:52px;width:12px;height:3px;border:1px solid #bbb;background:#f8f8f8"></div>
<div class="a" style="left:22px;top:52px;width:12px;height:3px;border:1px solid #bbb;background:#f8f8f8"></div>
<div class="a" style="left:35px;top:52px;width:8px;height:3px;border:1px solid #bbb;background:#f8f8f8"></div>
<div class="a" style="left:44px;top:52px;width:8px;height:3px;border:1px solid #bbb;background:#999"></div>
<div class="a" style="left:53px;top:52px;width:8px;height:3px;border:1px solid #bbb;background:#aaa"></div>
<div class="a" style="left:11px;top:60px;width:18px;height:1px;background:#999"></div>
<svg class="a" style="left:10px;top:66px" width="23" height="26" viewBox="0 0 26 30" preserveAspectRatio="none"><path d="M13 0C14 5 26 10 26 18.5 26 25 20.5 30 13 30 5.5 30 0 25 0 18.5 0 10 12 5 13 0Z" fill="#0f6fb3"/><path d="M6 21C8 17 11 19 13 21 15 23 18 19 21 20 20 25 16 27 13 25 10 23 8 25 6 21Z" fill="#fff"/><path d="M9 8C11 6 12.5 4 13 2" stroke="#6fb0e0" stroke-width="1.2" fill="none"/></svg>
<div class="a" style="left:76px;top:57px;width:2px;height:37px;background:#ccc"></div>
<div class="a" style="left:7px;top:94px;width:72px;height:3px;background:#d0d0d0"></div>
</div><div class="rbtn" style="left:902px;top:114px;width:48px;height:26px;line-height:24px;font-size:13.5px;color:#222">削除</div><svg class="a" style="left:657px;top:232px" width="13" height="14" viewBox="0 0 13 14"><path d="M.5 .5h8.5l3.5 3.5v9.5h-12z" fill="#fff" stroke="#777"/><rect x="2" y="5" width="9" height="7.5" fill="#e5a800"/><path d="M2 9l3-2.5 2.5 2 3.5-3v7H2z" fill="#f7d64a"/></svg><div class="a blue" style="left:674px;top:232px;font-size:13px;line-height:20px;white-space:nowrap;font-weight:bold">スクリーンショット <span style="font-size:15px">2015-09-06</span></div><div class="a" style="left:655px;top:252px;font-size:14.5px;line-height:20px;white-space:nowrap;color:#222"><span class="blue" style="font-weight:bold;font-size:14px">0.20.35.png</span> (80.29 KB)</div><div class="lab" style="left:655px;top:277px;font-size:10px;line-height:14px">スタイル:</div><div class="sel" style="left:702px;top:273px;width:168px;height:24px;line-height:22px;font-size:13px;padding-left:8px">オリジナル画像<svg class="a" style="left:152px;top:6px" width="7" height="11" viewBox="0 0 7 11"><path d="M0 4.5L3.5 0 7 4.5zM0 6.5l3.5 4.5L7 6.5z" fill="#222"/></svg></div><div class="rbtn" style="left:655px;top:298px;width:57px">Insert</div><div class="lab" style="left:655px;top:327px;font-size:10px;line-height:14px">代替文字列</div><div class="inp" style="left:655px;top:343px;width:237px;height:28px;line-height:26px"><span style="font-size:13px">ブロックの編集</span></div><div class="desc" style="left:655px;top:372px;font-size:11px;line-height:14px;white-space:nowrap">このテキストは、音声読み上げソフト・検索エ<br>ンジン・画像がロードできない際、などに利用<br>されます。</div><div class="hl" style="left:649px;top:421px;width:307px;background:#dedede"></div><svg class="a" style="left:656px;top:430px" width="13" height="13" viewBox="0 0 15 15"><path d="M7.5 1.5v12M1.5 7.5h12" stroke="#666" stroke-width="1.3"/><path d="M7.5 0l2.3 2.8h-4.6zM7.5 15l2.3-2.8h-4.6zM0 7.5l2.8 2.3v-4.6zM15 7.5l-2.8 2.3v-4.6z" fill="#666"/></svg><div class="a" style="left:685px;top:427px;width:110px;height:102px;border:1px solid #8f8f8f;background:#fff;overflow:hidden;box-shadow:0 1px 1px rgba(0,0,0,.2)"><div class="a" style="left:0;top:0;width:108px;height:11px;background:linear-gradient(#3a3a3a,#2a2a2a)"></div><div class="a" style="left:3px;top:4px;width:2px;height:3px;background:#999"></div><div class="a" style="left:7px;top:3px;width:20px;height:4px;background:#e0e0e0"></div><div class="a" style="left:38px;top:5px;width:66px;height:1px;background:repeating-linear-gradient(90deg,#777 0 7px,transparent 7px 12px)"></div><div class="a" style="left:3px;top:12px;width:102px;height:87px;background:#fafafa"></div><div class="a" style="left:4px;top:14px;width:14px;height:3px;background:#1a7cc4"></div><div class="a" style="left:20px;top:15px;width:8px;height:1px;background:#aaa"></div><div class="a" style="left:6px;top:20px;width:97px;height:3px;background:#e2e2e2"></div><div class="a" style="left:6px;top:23.0px;width:97px;height:3.4px;background:#f0f0f0"></div><div class="a" style="left:8px;top:24.3px;width:12px;height:1px;background:#aaa"></div><div class="a" style="left:47px;top:24.3px;width:16px;height:1px;background:#bbb"></div><div class="a" style="left:88px;top:24.3px;width:9px;height:1px;background:#6aa6d6"></div><div class="a" style="left:6px;top:26.4px;width:97px;height:3.4px;background:#fff"></div><div class="a" style="left:8px;top:27.7px;width:19px;height:1px;background:#aaa"></div><div class="a" style="left:47px;top:27.7px;width:16px;height:1px;background:#bbb"></div><div class="a" style="left:88px;top:27.7px;width:9px;height:1px;background:#6aa6d6"></div><div class="a" style="left:6px;top:29.8px;width:97px;height:3.4px;background:#f0f0f0"></div><div class="a" style="left:8px;top:31.1px;width:12px;height:1px;background:#aaa"></div><div class="a" style="left:47px;top:31.1px;width:16px;height:1px;background:#bbb"></div><div class="a" style="left:88px;top:31.1px;width:9px;height:1px;background:#6aa6d6"></div><div class="a" style="left:6px;top:33.2px;width:97px;height:3.4px;background:#fff"></div><div class="a" style="left:8px;top:34.5px;width:19px;height:1px;background:#aaa"></div><div class="a" style="left:47px;top:34.5px;width:16px;height:1px;background:#bbb"></div><div class="a" style="left:88px;top:34.5px;width:9px;height:1px;background:#6aa6d6"></div><div class="a" style="left:6px;top:36.6px;width:97px;height:3.4px;background:#f0f0f0"></div><div class="a" style="left:8px;top:37.9px;width:12px;height:1px;background:#aaa"></div><div class="a" style="left:47px;top:37.9px;width:16px;height:1px;background:#bbb"></div><div class="a" style="left:88px;top:37.9px;width:9px;height:1px;background:#6aa6d6"></div><div class="a" style="left:6px;top:40.0px;width:97px;height:3.4px;background:#fff"></div><div class="a" style="left:8px;top:41.3px;width:19px;height:1px;background:#aaa"></div><div class="a" style="left:47px;top:41.3px;width:16px;height:1px;background:#bbb"></div><div class="a" style="left:88px;top:41.3px;width:9px;height:1px;background:#6aa6d6"></div><div class="a" style="left:6px;top:43.4px;width:97px;height:3.4px;background:#f0f0f0"></div><div class="a" style="left:8px;top:44.7px;width:12px;height:1px;background:#aaa"></div><div class="a" style="left:47px;top:44.7px;width:16px;height:1px;background:#bbb"></div><div class="a" style="left:88px;top:44.7px;width:9px;height:1px;background:#6aa6d6"></div><div class="a" style="left:6px;top:46.8px;width:97px;height:3.4px;background:#fff"></div><div class="a" style="left:8px;top:48.1px;width:19px;height:1px;background:#aaa"></div><div class="a" style="left:47px;top:48.1px;width:16px;height:1px;background:#bbb"></div><div class="a" style="left:88px;top:48.1px;width:9px;height:1px;background:#6aa6d6"></div><div class="a" style="left:6px;top:50.2px;width:97px;height:3.4px;background:#f0f0f0"></div><div class="a" style="left:8px;top:51.5px;width:12px;height:1px;background:#aaa"></div><div class="a" style="left:47px;top:51.5px;width:16px;height:1px;background:#bbb"></div><div class="a" style="left:88px;top:51.5px;width:9px;height:1px;background:#6aa6d6"></div><div class="a" style="left:6px;top:53.6px;width:97px;height:3.4px;background:#fff"></div><div class="a" style="left:8px;top:54.9px;width:19px;height:1px;background:#aaa"></div><div class="a" style="left:47px;top:54.9px;width:16px;height:1px;background:#bbb"></div><div class="a" style="left:88px;top:54.9px;width:9px;height:1px;background:#6aa6d6"></div><div class="a" style="left:6px;top:57.0px;width:97px;height:3.4px;background:#f0f0f0"></div><div class="a" style="left:8px;top:58.3px;width:12px;height:1px;background:#aaa"></div><div class="a" style="left:47px;top:58.3px;width:16px;height:1px;background:#bbb"></div><div class="a" style="left:88px;top:58.3px;width:9px;height:1px;background:#6aa6d6"></div><div class="a" style="left:6px;top:60.4px;width:97px;height:3.4px;background:#fff"></div><div class="a" style="left:8px;top:61.7px;width:19px;height:1px;background:#aaa"></div><div class="a" style="left:47px;top:61.7px;width:16px;height:1px;background:#bbb"></div><div class="a" style="left:88px;top:61.7px;width:9px;height:1px;background:#6aa6d6"></div><div class="a" style="left:6px;top:63.8px;width:97px;height:3.4px;background:#f0f0f0"></div><div class="a" style="left:8px;top:65.1px;width:12px;height:1px;background:#aaa"></div><div class="a" style="left:47px;top:65.1px;width:16px;height:1px;background:#bbb"></div><div class="a" style="left:88px;top:65.1px;width:9px;height:1px;background:#6aa6d6"></div><div class="a" style="left:6px;top:67.2px;width:97px;height:3.4px;background:#fff"></div><div class="a" style="left:8px;top:68.5px;width:19px;height:1px;background:#aaa"></div><div class="a" style="left:47px;top:68.5px;width:16px;height:1px;background:#bbb"></div><div class="a" style="left:88px;top:68.5px;width:9px;height:1px;background:#6aa6d6"></div><div class="a" style="left:6px;top:70.6px;width:97px;height:3.4px;background:#f0f0f0"></div><div class="a" style="left:8px;top:71.9px;width:12px;height:1px;background:#aaa"></div><div class="a" style="left:47px;top:71.9px;width:16px;height:1px;background:#bbb"></div><div class="a" style="left:88px;top:71.9px;width:9px;height:1px;background:#6aa6d6"></div><div class="a" style="left:6px;top:74.0px;width:97px;height:3.4px;background:#fff"></div><div class="a" style="left:8px;top:75.3px;width:19px;height:1px;background:#aaa"></div><div class="a" style="left:47px;top:75.3px;width:16px;height:1px;background:#bbb"></div><div class="a" style="left:88px;top:75.3px;width:9px;height:1px;background:#6aa6d6"></div><div class="a" style="left:6px;top:77.4px;width:97px;height:3.4px;background:#f0f0f0"></div><div class="a" style="left:8px;top:78.7px;width:12px;height:1px;background:#aaa"></div><div class="a" style="left:47px;top:78.7px;width:16px;height:1px;background:#bbb"></div><div class="a" style="left:88px;top:78.7px;width:9px;height:1px;background:#6aa6d6"></div><div class="a" style="left:6px;top:80.8px;width:97px;height:3.4px;background:#fff"></div><div class="a" style="left:8px;top:82.1px;width:19px;height:1px;background:#aaa"></div><div class="a" style="left:47px;top:82.1px;width:16px;height:1px;background:#bbb"></div><div class="a" style="left:88px;top:82.1px;width:9px;height:1px;background:#6aa6d6"></div><div class="a" style="left:6px;top:84.2px;width:97px;height:3.4px;background:#f0f0f0"></div><div class="a" style="left:8px;top:85.5px;width:12px;height:1px;background:#aaa"></div><div class="a" style="left:47px;top:85.5px;width:16px;height:1px;background:#bbb"></div><div class="a" style="left:88px;top:85.5px;width:9px;height:1px;background:#6aa6d6"></div><div class="a" style="left:6px;top:87.6px;width:97px;height:3.4px;background:#fff"></div><div class="a" style="left:8px;top:88.9px;width:19px;height:1px;background:#aaa"></div><div class="a" style="left:47px;top:88.9px;width:16px;height:1px;background:#bbb"></div><div class="a" style="left:88px;top:88.9px;width:9px;height:1px;background:#6aa6d6"></div><div class="a" style="left:6px;top:94px;width:14px;height:1px;background:#999"></div></div><div class="rbtn" style="left:902px;top:427px;width:48px;height:26px;line-height:24px;font-size:13.5px;color:#222">削除</div><svg class="a" style="left:657px;top:545px" width="13" height="14" viewBox="0 0 13 14"><path d="M.5 .5h8.5l3.5 3.5v9.5h-12z" fill="#fff" stroke="#777"/><rect x="2" y="5" width="9" height="7.5" fill="#e5a800"/><path d="M2 9l3-2.5 2.5 2 3.5-3v7H2z" fill="#f7d64a"/></svg><div class="a blue" style="left:674px;top:545px;font-size:13px;line-height:20px;white-space:nowrap;font-weight:bold">スクリーンショット <span style="font-size:15px">2015-09-06</span></div><div class="a" style="left:655px;top:565px;font-size:14.5px;line-height:20px;white-space:nowrap;color:#222"><span class="blue" style="font-weight:bold;font-size:14px">0.11.15.png</span> (148.75 KB)</div><div class="lab" style="left:655px;top:590px;font-size:10px;line-height:14px">スタイル:</div><div class="sel" style="left:702px;top:586px;width:168px;height:24px;line-height:22px;font-size:13px;padding-left:8px">オリジナル画像<svg class="a" style="left:152px;top:6px" width="7" height="11" viewBox="0 0 7 11"><path d="M0 4.5L3.5 0 7 4.5zM0 6.5l3.5 4.5L7 6.5z" fill="#222"/></svg></div><div class="rbtn" style="left:655px;top:611px;width:57px">Insert</div><div class="lab" style="left:655px;top:640px;font-size:10px;line-height:14px">代替文字列</div><div class="inp" style="left:655px;top:656px;width:237px;height:28px;line-height:26px"></div><div class="desc" style="left:655px;top:685px;font-size:11px;line-height:14px;white-space:nowrap">このテキストは、音声読み上げソフト・検索エ<br>ンジン・画像がロードできない際、などに利用<br>されます。</div></div>
</body></html>
